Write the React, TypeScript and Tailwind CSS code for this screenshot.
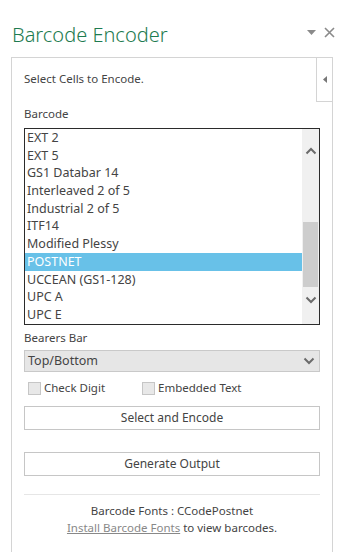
import React from 'react'

const items = [
  'EXT 2',
  'EXT 5',
  'GS1 Databar 14',
  'Interleaved 2 of 5',
  'Industrial 2 of 5',
  'ITF14',
  'Modified Plessy',
  'POSTNET',
  'UCCEAN (GS1-128)',
  'UPC A',
  'UPC E',
]

const Chevron: React.FC<{ up?: boolean; className?: string }> = ({ up, className }) => (
  <svg width="12" height="8" viewBox="0 0 12 8" className={className}>
    <path
      d={up ? 'M1.5 6.5 L6 2 L10.5 6.5' : 'M1.5 1.5 L6 6 L10.5 1.5'}
      fill="none"
      stroke="#6b6b6b"
      strokeWidth="2"
    />
  </svg>
)

export default function App() {
  return (
    <div className="w-[345px] h-[552px] bg-white overflow-hidden text-[#444] text-[11.5px]" style={{ fontFamily: '"Noto Sans", "Open Sans", sans-serif' }}>
      <div className="flex items-center justify-between pl-3 pr-[10px] pt-[26px] h-[57px]">
        <h1 className="text-[20px] font-light text-[#1e7b50] leading-none pb-[14px]">Barcode Encoder</h1>
        <div className="flex items-center gap-[8px] pb-[18px]">
          <svg width="9" height="5" viewBox="0 0 9 5"><path d="M0 0 H9 L4.5 5 Z" fill="#8a8a8a" /></svg>
          <svg width="11" height="11" viewBox="0 0 11 11"><path d="M1 1 L10 10 M10 1 L1 10" stroke="#8a8a8a" strokeWidth="1.6" /></svg>
        </div>
      </div>

      <div className="relative ml-[11px] w-[322px] h-[520px] border border-[#d4d4d4]">
        <div className="absolute right-[-1px] top-[-1px] w-[17px] h-[45px] border border-[#d4d4d4] bg-white flex items-center justify-center">
          <svg width="4" height="7" viewBox="0 0 4 7"><path d="M4 0 V7 L0 3.5 Z" fill="#777" /></svg>
        </div>

        <div className="px-[12px]">
          <div className="pt-[12px] leading-[18px]">Select Cells to Encode.</div>
          <div className="mt-[17px] leading-[18px]">Barcode</div>

          <div className="mt-[5px] h-[197px] border border-[#2b2b2b] flex">
            <div className="flex-1 overflow-hidden">
              {items.map((it) => (
                <div
                  key={it}
                  className={`h-[17.7px] leading-[17.7px] pl-[2px] text-[12.5px] ${it === 'POSTNET' ? 'bg-[#68c1e8] text-white' : ''}`}
                >
                  {it}
                </div>
              ))}
            </div>
            <div className="w-[17px] bg-[#f0f0f0] flex flex-col items-center">
              <div className="h-[40px] flex items-center justify-center pt-[4px]">
                <Chevron up />
              </div>
              <div className="mt-[53px] w-[15px] h-[65px] bg-[#cdcdcd]" />
              <div className="h-[26px] flex items-center justify-center">
                <Chevron />
              </div>
            </div>
          </div>

          <div className="mt-[4px] leading-[18px]">Bearers Bar</div>
          <div className="mt-[3px] h-[22px] bg-[#e6e6e6] border border-[#c9c9c9] flex items-center justify-between pl-[3px] pr-[4px]">
            <span className="text-[12.5px]">Top/Bottom</span>
            <Chevron />
          </div>

          <div className="mt-[8px] flex items-center h-[16px] pl-[4px]">
            <div className="flex items-center gap-[3px] w-[114px]">
              <span className="w-[13px] h-[13px] bg-[#e8e8e8] border border-[#c6c6c6]" />
              <span>Check Digit</span>
            </div>
            <div className="flex items-center gap-[3px]">
              <span className="w-[13px] h-[13px] bg-[#e8e8e8] border border-[#c6c6c6]" />
              <span>Embedded Text</span>
            </div>
          </div>

          <button className="mt-[10px] w-full h-[24px] border border-[#c6c6c6] bg-white text-[12px] text-[#444]">
            Select and Encode
          </button>
          <button className="mt-[22px] w-full h-[24px] border border-[#c6c6c6] bg-white text-[12px] text-[#444]">
            Generate Output
          </button>

          <div className="mt-[18px] h-px bg-[#e6e6e6]" />
          <div className="mt-[7px] text-center leading-[17px]">
            <div>Barcode Fonts : CCodePostnet</div>
            <div>
              <span className="underline text-[#888]">Install Barcode Fonts</span> to view barcodes.
            </div>
          </div>
        </div>
      </div>
    </div>
  )
}
